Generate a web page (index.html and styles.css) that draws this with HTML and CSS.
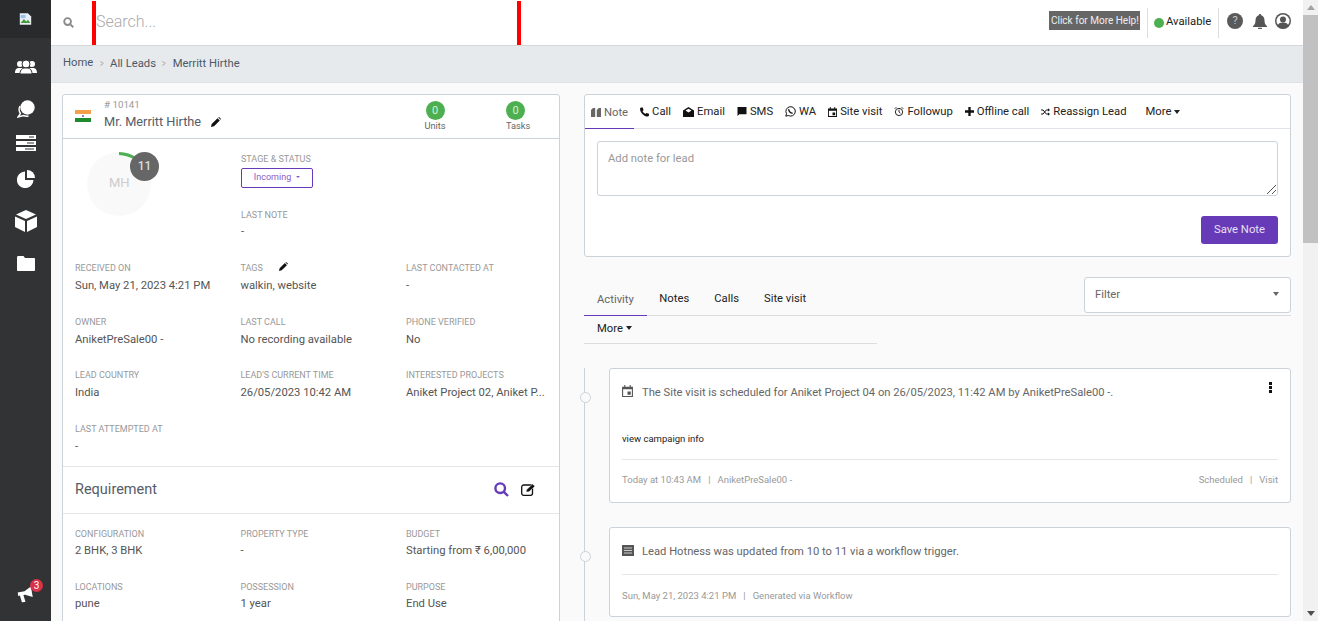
FILE: index.html
```html
<!DOCTYPE html>
<html>
<head>
<meta charset="utf-8">
<title>Merritt Hirthe</title>
<link rel="stylesheet" href="styles.css">
</head>
<body>
<aside class="sidebar">
  <div class="logo">
    <svg width="13" height="12" viewBox="0 0 16 14"><path d="M1 0h10l4 4v10H1z" fill="#e8eef4"/><path d="M2 12l4-5 3 3 2-2 3 4z" fill="#4a9a3c"/><path d="M2 2h6v4H2z" fill="#9cc0e8"/></svg>
  </div>
  <nav class="side-nav">
    <a class="side-item item-people"><svg width="22" height="16" viewBox="0 0 22 16" fill="#fff"><circle cx="5" cy="5" r="3"/><circle cx="17" cy="5" r="3"/><path d="M0 14c0-4 2-5 4-5h2c2 0 3 1 3 5zM13 14c0-4 1-5 3-5h2c2 0 4 1 4 5z"/><circle cx="11" cy="5" r="4" stroke="#323335"/><path d="M5 15c0-5 3-6 5-6h2c2 0 5 1 5 6z" stroke="#323335"/></svg></a>
    <a class="side-item item-chat"><svg width="18" height="18" viewBox="0 0 18 18"><circle cx="10.500" cy="7.500" r="7.200" fill="#fff"/><path d="M3 6a7 7 0 0 0 .5 7.500L1 17l5.500-1.500a8 8 0 0 0 5 .5" fill="none" stroke="#fff" stroke-width="1.400"/></svg></a>
    <a class="side-item item-server"><svg width="20" height="16" viewBox="0 0 20 16" fill="#fff"><path d="M0 0h20v4H0zM0 6h20v4H0zM0 12h20v4H0z"/><path d="M13 1.500h5v1h-5zM11 7.500h7v1h-7zM9 13.500h9v1H9z" fill="#323335"/></svg></a>
    <a class="side-item item-pie"><svg width="18" height="18" viewBox="0 0 18 18" fill="#fff"><path d="M8 1.500V10h8.500A8.300 8.300 0 1 1 8 1.500z"/><path d="M10 0a8 8 0 0 1 8 8h-8z"/></svg></a>
    <a class="side-item item-cube"><svg width="22" height="22" viewBox="0 0 22 22" fill="#fff"><path d="M11 0l10 4.500L11 9 1 4.500z"/><path d="M0 6.500l10 4.500v11L0 17zM22 6.500L12 11v11l10-5z"/></svg></a>
    <a class="side-item item-folder"><svg width="18" height="15" viewBox="0 0 18 15" fill="#fff"><path d="M0 1.500C0 .5.500 0 1.500 0h5L8 2h9c.7 0 1 .4 1 1v11c0 .6-.4 1-1 1H1c-.6 0-1-.4-1-1z"/></svg></a>
  </nav>
  <div class="side-bottom">
    <svg class="horn" width="16" height="15" viewBox="0 0 18 16" fill="#fff"><path d="M0 4h8l8-4v12L8 8H6l1 8H3L2 8H0z"/></svg>
    <span class="side-badge">3</span>
  </div>
</aside>

<div class="main">
  <header class="topbar">
    <svg class="search-icon" width="11" height="11" viewBox="0 0 12 12" fill="none" stroke="#8a8a8a" stroke-width="2"><circle cx="5" cy="5" r="3.700"/><path d="M8 8l3.200 3.200"/></svg>
    <div class="search-box">Search...</div>
    <div class="top-right">
      <span class="help-btn">Click for More Help!</span>
      <span class="status"><i class="dot"></i><span class="status-text">Available</span></span>
      <span class="top-icons">
        <span class="q-icon">?</span>
        <svg class="bell" width="14" height="15" viewBox="0 0 14 15" fill="#555"><path d="M7 0a1.200 1.200 0 0 1 1.200 1.300C10.500 2 11.500 4 11.500 6.500c0 3 1 4.500 2.500 5.500v1H0v-1c1.500-1 2.500-2.500 2.500-5.500C2.500 4 3.500 2 5.800 1.300A1.200 1.200 0 0 1 7 0zM5 13.800h4a2 2 0 0 1-4 0z"/></svg>
        <svg width="16" height="16" viewBox="0 0 16 16"><circle cx="8" cy="8" r="8" fill="#555"/><circle cx="8" cy="8" r="6.500" fill="#fff"/><circle cx="8" cy="6.500" r="3" fill="#555"/><path d="M2.500 13c.5-2.500 2.500-3.500 5.500-3.500s5 1 5.500 3.500a7 7 0 0 1-11 0z" fill="#555"/></svg>
      </span>
    </div>
  </header>

  <div class="crumbs">
    <span class="crumb-home">Home</span><span class="sep">&gt;</span><span>All Leads</span><span class="sep">&gt;</span><span>Merritt Hirthe</span>
  </div>

  <div class="content">
    <section class="lead-card">
      <div class="lead-head">
        <span class="flag"><i class="f-o"></i><i class="f-w"></i><i class="f-g"></i></span>
        <div class="lead-name">
          <div class="lead-id"># 10141</div>
          <div class="lead-title">Mr. Merritt Hirthe
            <svg class="pen" width="10" height="10" viewBox="0 0 10 10" fill="#111"><path d="M0 10l.7-3L6.500 1.200l2.300 2.300L3 9.300zM7.200.5L8 0l2 2-.5.8z"/></svg>
          </div>
        </div>
        <div class="counter counter-units"><span class="count-dot">0</span>Units</div>
        <div class="counter counter-tasks"><span class="count-dot">0</span>Tasks</div>
      </div>

      <div class="lead-body">
        <div class="top-fields">
          <div class="avatar">
            <svg width="64" height="64" viewBox="0 0 64 64"><circle cx="32" cy="32" r="32" fill="#f9f9f9"/><path d="M32 1.500A30.500 30.500 0 0 1 49 7" fill="none" stroke="#4caf50" stroke-width="3"/></svg>
            <span class="avatar-text">MH</span>
            <span class="hot-badge">11</span>
          </div>
          <div class="stage-col">
            <div class="label">STAGE &amp; STATUS</div>
            <div class="stage-btn">Incoming<i class="caret caret-small"></i></div>
            <div class="label label-note">LAST NOTE</div>
            <div class="value">-</div>
          </div>
        </div>

        <div class="fields lead-fields">
          <div class="field"><div class="label">RECEIVED ON</div><div class="value">Sun, May 21, 2023 4:21 PM</div></div>
          <div class="field"><div class="label">TAGS <svg class="pen pen-tag" width="9" height="9" viewBox="0 0 10 10" fill="#111"><path d="M0 10l.7-3L6.500 1.200l2.300 2.300L3 9.300zM7.200.5L8 0l2 2-.5.8z"/></svg></div><div class="value">walkin, website</div></div>
          <div class="field"><div class="label">LAST CONTACTED AT</div><div class="value">-</div></div>
          <div class="field"><div class="label">OWNER</div><div class="value">AniketPreSale00 -</div></div>
          <div class="field"><div class="label">LAST CALL</div><div class="value">No recording available</div></div>
          <div class="field"><div class="label">PHONE VERIFIED</div><div class="value">No</div></div>
          <div class="field"><div class="label">LEAD COUNTRY</div><div class="value">India</div></div>
          <div class="field"><div class="label">LEAD'S CURRENT TIME</div><div class="value">26/05/2023 10:42 AM</div></div>
          <div class="field"><div class="label">INTERESTED PROJECTS</div><div class="value nowrap">Aniket Project 02, Aniket P...</div></div>
          <div class="field"><div class="label">LAST ATTEMPTED AT</div><div class="value">-</div></div>
        </div>
      </div>

      <div class="req-head">
        <span class="req-title">Requirement</span>
        <svg class="req-search" width="15" height="15" viewBox="0 0 15 15" fill="none" stroke="#673ab7" stroke-width="2.400"><circle cx="6.200" cy="6.200" r="4.800"/><path d="M9.800 9.800l4.200 4.200"/></svg>
        <svg width="15" height="13" viewBox="0 0 15 13"><rect x=".7" y="2" width="10.800" height="10.300" rx="2" fill="none" stroke="#111" stroke-width="1.300"/><path d="M5 9l.5-2.200L11.500 1 14 3.200 8 8.800z" fill="#111" stroke="#fff" stroke-width=".5"/></svg>
      </div>
      <div class="fields req-fields">
        <div class="field"><div class="label">CONFIGURATION</div><div class="value">2 BHK, 3 BHK</div></div>
        <div class="field"><div class="label">PROPERTY TYPE</div><div class="value">-</div></div>
        <div class="field"><div class="label">BUDGET</div><div class="value">Starting from ₹ 6,00,000</div></div>
        <div class="field"><div class="label">LOCATIONS</div><div class="value">pune</div></div>
        <div class="field"><div class="label">POSSESSION</div><div class="value">1 year</div></div>
        <div class="field"><div class="label">PURPOSE</div><div class="value">End Use</div></div>
      </div>
    </section>

    <section class="right-col">
      <div class="note-card">
        <div class="note-tabs">
          <span class="note-tab active"><svg width="10" height="9" viewBox="0 0 10 9" fill="#666"><path d="M0 2l2-2h2.200v9H0zM5.800 2l2-2H10v9H5.800z"/></svg>Note</span>
          <span class="note-tab"><svg width="9" height="10" viewBox="0 0 10 10" fill="#111"><path d="M1 0h2l1 3-1.200 1C3.500 5.500 4.500 6.500 6 7.200L7 6l3 1v2l-1 1C4 10 0 5.500 0 1z"/></svg>Call</span>
          <span class="note-tab"><svg width="11" height="10" viewBox="0 0 11 10" fill="#111"><path d="M5.500 0L11 3.500V10H0V3.500zM2.500 3.500L5.500 5.500l3-2-3-1.700z"/></svg>Email</span>
          <span class="note-tab"><svg width="10" height="9" viewBox="0 0 10 10" fill="#111"><path d="M0 0h10v8H2l-2 2z"/></svg>SMS</span>
          <span class="note-tab"><svg width="11" height="11" viewBox="0 0 11 11" fill="none" stroke="#111"><path d="M.8 10.200l.7-2.500A4.700 4.700 0 1 1 3.300 9.500z"/><path d="M3.800 3.200c-.5 1.800 2 4.300 3.900 3.900" stroke-width="1.300"/></svg>WA</span>
          <span class="note-tab"><svg width="9" height="10" viewBox="0 0 10 11" fill="#111"><path d="M0 1.500h2V0h1v1.500h4V0h1v1.500h2V11H0zM1 4v6h8V4zM5 6h3v3H5z" fill-rule="evenodd"/></svg>Site visit</span>
          <span class="note-tab"><svg width="10" height="11" viewBox="0 0 11 11" fill="none" stroke="#111"><circle cx="5.500" cy="6" r="4"/><path d="M5.500 3.500V6L7 7.200M.8 2.500L2.500.8M10.200 2.500L8.500.8"/></svg>Followup</span>
          <span class="note-tab"><svg width="9" height="9" viewBox="0 0 10 10" fill="#111"><path d="M3.700 0h2.600v3.700H10v2.600H6.300V10H3.700V6.300H0V3.700h3.700z"/></svg>Offline call</span>
          <span class="note-tab"><svg width="9" height="8" viewBox="0 0 11 9" fill="none" stroke="#111" stroke-width="1.200"><path d="M0 2h2.500l4 5H9M0 7h2.500l4-5H9"/><path d="M8.500 0L11 2 8.500 4zM8.500 5L11 7 8.500 9z" fill="#111" stroke="none"/></svg>Reassign Lead</span>
          <span class="note-tab tab-more">More<i class="caret"></i></span>
        </div>
        <div class="note-body">
          <div class="note-input">Add note for lead
            <svg class="resize" width="9" height="9" viewBox="0 0 9 9" stroke="#555" fill="none"><path d="M0 9L9 0M5 9l4-4"/></svg>
          </div>
          <div class="note-actions"><span class="save-btn">Save Note</span></div>
        </div>
      </div>

      <div class="activity-head">
        <div class="activity-tabs">
          <span class="act-tab active">Activity</span>
          <span class="act-tab">Notes</span>
          <span class="act-tab">Calls</span>
          <span class="act-tab">Site visit</span>
        </div>
        <div class="filter">Filter<i class="caret caret-grey"></i></div>
      </div>
      <div class="more-row"><span>More<i class="caret"></i></span></div>

      <div class="timeline">
        <article class="event event-visit">
          <div class="event-top">
            <svg class="event-icon" width="11" height="12" viewBox="0 0 10 11" fill="#555"><path d="M0 1.500h2V0h1v1.500h4V0h1v1.500h2V11H0zM1 4v6h8V4zM5 6h3v3H5z" fill-rule="evenodd"/></svg>
            <span>The Site visit is scheduled for Aniket Project 04 on 26/05/2023, 11:42 AM by AniketPreSale00 -.</span>
            <span class="kebab"><i></i><i></i><i></i></span>
          </div>
          <div class="event-link">view campaign info</div>
          <div class="event-foot">
            <span>Today at 10:43 AM &nbsp; | &nbsp; AniketPreSale00 -</span>
            <span>Scheduled &nbsp; | &nbsp; Visit</span>
          </div>
        </article>
        <article class="event event-hot">
          <div class="event-top">
            <svg class="event-icon" width="12" height="11" viewBox="0 0 12 11" fill="#555"><path d="M0 0h12v11H0z"/><path d="M2 2.500h8v1H2zM2 5h8v1H2zM2 7.500h8v1H2z" fill="#ccc"/></svg>
            <span>Lead Hotness was updated from 10 to 11 via a workflow trigger.</span>
          </div>
          <div class="event-foot">
            <span>Sun, May 21, 2023 4:21 PM &nbsp; | &nbsp; Generated via Workflow</span>
          </div>
        </article>
      </div>
    </section>
  </div>
</div>

<div class="scrollbar">
  <i class="arrow-up"></i>
  <div class="thumb"></div>
  <i class="arrow-down"></i>
</div>
</body>
</html>
```

FILE: styles.css
```css
* { box-sizing: border-box; }
html, body { margin: 0; padding: 0; height: 621px; overflow: hidden; }
body { display: flex; font-family: Roboto, "Liberation Sans", sans-serif; font-size: 11.250px; color: #555; background: #fafafa; }

/* sidebar */
.sidebar { width: 51px; flex: none; height: 621px; background: #323335; display: flex; flex-direction: column; }
.logo { height: 38px; background: #292a2b; padding: 13px 0 0 19px; }
.side-nav { flex: 1; }
.side-item { display: flex; justify-content: center; align-items: center; height: 36px; }
.item-people { margin-top: 11px; }
.item-chat { margin-top: 6px; }
.item-server { height: 32px; }
.item-pie { height: 40px; }
.item-cube { height: 44px; }
.item-folder { height: 40px; }
.side-bottom { position: relative; height: 48px; padding: 14px 0 0 18px; }
.horn { transform: rotate(-10deg); }
.side-badge { position: absolute; left: 30px; top: 6px; width: 13px; height: 13px; border-radius: 50%; background: #d9324a; color: #fff; font-size: 10px; line-height: 13px; text-align: center; }

/* top bar */
.main { flex: 1; min-width: 0; display: flex; flex-direction: column; }
.topbar { height: 46px; flex: none; background: #fff; border-bottom: 1px solid #d5d7da; display: flex; align-items: center; padding-left: 12px; }
.search-icon { flex: none; margin-right: 18px; }
.search-box { width: 429px; height: 44px; margin-top: 1px; border-left: 4px solid #f00; border-right: 4px solid #f00; font-size: 16px; color: #aaa; font-weight: 300; line-height: 41px; }
.top-right { margin-left: auto; display: flex; align-items: center; height: 30px; padding-right: 12px; }
.help-btn { background: #666; color: #eee; font-size: 10px; height: 19px; line-height: 19px; padding: 0 2px; width: 91px; text-align: center; white-space: nowrap; margin-right: 7px; margin-top: -5px; }
.status { display: flex; align-items: center; height: 30px; width: 72px; border-left: 1px solid #ddd; border-right: 1px solid #ddd; padding: 0 0 2px 6px; color: #222; }
.dot { width: 10px; height: 10px; border-radius: 50%; background: #4caf50; margin-right: 2px; margin-top: 2px; }
.top-icons { display: flex; align-items: center; gap: 8px; margin: -3px 0 0 8px; }
.bell { margin-left: 2px; }
.q-icon { width: 16px; height: 16px; border-radius: 50%; background: #5a5a5a; color: #ccc; font-size: 11px; line-height: 16px; text-align: center; }

/* breadcrumb */
.crumbs { height: 37px; flex: none; background: #e7eaed; border-bottom: 1px solid #dfe1e4; padding: 0 0 2px 12px; display: flex; align-items: center; font-size: 11.250px; color: #4d5866; }
.crumb-home { margin-top: -2px; }
.sep { color: #aaa; font-size: 11px; margin: 0 5.500px; transform: scaleX(.7); }

/* content */
.content { flex: 1; min-height: 0; display: flex; gap: 24px; padding: 11px 12px 0 11px; overflow: hidden; }
.label { font-size: 9px; color: #999; line-height: 12px; white-space: nowrap; }
.value { font-size: 11.250px; color: #555; line-height: 14px; margin-top: 4px; }
.lead-fields .value { margin-top: 5px; }
.nowrap { white-space: nowrap; }

/* left card */
.lead-card { width: 498px; flex: none; height: 560px; background: #fff; border: 1px solid #ccd2da; border-radius: 3px; }
.lead-head { height: 44px; display: flex; align-items: flex-start; border-bottom: 1px solid #ccd2da; }
.flag { width: 16px; height: 12px; margin: 15px 0 0 12px; display: flex; flex-direction: column; }
.flag i { flex: 1; display: block; }
.f-o { background: #f4a04a; }
.f-w { background: radial-gradient(circle, #8a8ac0 1.200px, #fff 1.500px); }
.f-g { background: #1f8a2e; }
.lead-name { margin-left: 13px; width: 311px; padding-top: 3px; }
.lead-id { font-size: 9.750px; color: #999; line-height: 13px; }
.lead-title { font-size: 12.750px; color: #555c66; line-height: 16px; margin-top: 3px; }
.pen { margin-left: 7px; vertical-align: -1px; }
.pen-tag { margin-left: 14px; vertical-align: 0; }
.counter { width: 40px; text-align: center; font-size: 9.250px; color: #666; line-height: 12px; padding-top: 6px; }
.counter-tasks { margin-left: 40px; padding-left: 11px; text-align: left; }
.count-dot { display: block; width: 19px; height: 19px; margin: 0 auto; border-radius: 50%; background: #4caf50; color: #d8f0d8; font-size: 11px; line-height: 19px; text-align: center; }
.counter-tasks .count-dot { margin: 0; }

.lead-body { padding: 12px 12px 0; height: 328px; border-bottom: 1px solid #e4e6ea; }
.top-fields { display: flex; height: 111px; }
.avatar { position: relative; width: 165px; padding-left: 12px; margin-top: 1px; }
.avatar-text { position: absolute; left: 34px; top: 23px; font-size: 13px; color: #ccc; width: 20px; text-align: center; }
.hot-badge { position: absolute; left: 55px; top: 0; width: 29px; height: 29px; border-radius: 50%; background: #666; color: #ddd; font-size: 12px; font-weight: 500; line-height: 28px; text-align: center; }
.stage-col { padding-left: 1px; padding-top: 2px; }
.stage-btn { width: 72px; height: 20px; margin-top: 3px; border: 1px solid #673ab7; border-radius: 2px; color: #8a5cc8; font-size: 9px; line-height: 16px; text-align: center; }
.label-note { margin-top: 21px; }
.caret { display: inline-block; border-top: 4px solid currentColor; border-left: 3px solid transparent; border-right: 3px solid transparent; margin-left: 3px; vertical-align: 2px; }
.caret-small { margin-left: 5px; border-top-width: 2.500px; border-left-width: 2.500px; border-right-width: 2.500px; }

.fields { display: grid; grid-template-columns: 165.500px 165.500px 140px; grid-auto-rows: 53.500px; }
.field { min-width: 0; }
.req-head { height: 47px; display: flex; align-items: center; padding: 0 23px 2px 12px; border-bottom: 1px solid #e4e6ea; }
.req-title { font-size: 14.500px; color: #555c66; margin-right: auto; }
.req-search { margin-right: 12px; }
.req-fields { margin: 14px 12px 0; grid-auto-rows: 53px; }

/* note card */
.right-col { width: 707px; flex: none; }
.note-card { height: 163px; background: #fff; border: 1px solid #ccd2da; border-radius: 3px; }
.note-tabs { height: 34px; display: flex; gap: 12px; border-bottom: 1px solid #e2e3ea; color: #222; font-size: 11.250px; }
.note-tab { display: flex; align-items: center; gap: 3px; white-space: nowrap; }
.note-tab.active { color: #666; padding: 0 6px; margin-right: -6px; box-shadow: inset 0 -2px 0 -1px #673ab7; height: 34px; }
.tab-more { margin-left: 7px; gap: 0; }
.note-body { padding: 12px 12px 0; }
.note-input { position: relative; height: 55px; border: 1px solid #ccd2da; border-radius: 3px; padding: 10px 10px; color: #999; }
.resize { position: absolute; right: 1px; bottom: 1px; }
.note-actions { display: flex; justify-content: flex-end; margin-top: 20px; }
.save-btn { width: 77px; height: 28px; border-radius: 3px; background: #673ab7; color: #e8e0f5; line-height: 27px; text-align: center; }

/* activity */
.activity-head { display: flex; height: 39px; margin-top: 20px; border-bottom: 1px solid #ddd; align-items: flex-start; }
.activity-tabs { display: flex; height: 38px; align-items: flex-end; color: #222; }
.act-tab { padding: 0 12.500px 7px; height: 24px; display: block; line-height: 16px; white-space: nowrap; }
.act-tab.active { color: #666; border-bottom: 1px solid #673ab7; height: 24px; margin-bottom: -1px; padding-left: 13px; padding-right: 13px; }
.filter { margin-left: auto; width: 207px; height: 36px; background: #fff; border: 1px solid #ccd2da; border-radius: 3px; padding: 0 10px 2px; line-height: 33px; color: #666; display: flex; justify-content: space-between; align-items: center; }
.caret-grey { color: #666; margin-right: 1px; }
.more-row { width: 293px; height: 28px; border-bottom: 1px solid #ddd; padding: 6px 0 0 13px; color: #222; line-height: 14px; }
.more-row .caret { vertical-align: 2px; }

/* timeline */
.timeline { margin-top: 24px; border-left: 1px solid #ccd2da; padding-left: 24px; height: 260px; }
.event { position: relative; background: #fff; border: 1px solid #ccd2da; border-radius: 3px; padding: 0 12px; }
.event::before { content: ""; position: absolute; left: -30px; top: 23px; width: 9px; height: 9px; border: 1px solid #ccd2da; border-radius: 50%; background: #fafafa; }
.event-visit { height: 135px; }
.event-hot { height: 90px; margin-top: 24px; }
.event-top { display: flex; align-items: center; height: 46px; color: #666; font-size: 11.200px; position: relative; }
.event-hot .event-top { height: 47px; border-bottom: 1px solid #e4e6ea; }
.event-icon { flex: none; margin-right: 9px; margin-top: -2px; }
.event-hot .event-icon { margin-right: 8px; }
.kebab { position: absolute; right: 6px; top: 13px; display: flex; flex-direction: column; gap: 1px; }
.kebab i { display: block; width: 3px; height: 3px; background: #111; }
.event-link { height: 45px; padding-top: 18px; font-size: 9.500px; color: #222; border-bottom: 1px solid #e4e6ea; }
.event-foot { display: flex; justify-content: space-between; padding-top: 14px; font-size: 9.500px; color: #999; }
.event-hot .event-foot { padding-top: 15px; }

/* page scrollbar */
.scrollbar { width: 15px; flex: none; height: 621px; background: #f1f1f1; display: flex; flex-direction: column; align-items: center; }
.thumb { width: 15px; height: 228px; margin-top: 5px; background: #c1c1c1; }
.arrow-up { margin-top: 5px; border-bottom: 5px solid #a3a3a3; border-left: 4px solid transparent; border-right: 4px solid transparent; }
.arrow-down { margin-top: auto; margin-bottom: 5px; border-top: 5px solid #505050; border-left: 4px solid transparent; border-right: 4px solid transparent; }
```
